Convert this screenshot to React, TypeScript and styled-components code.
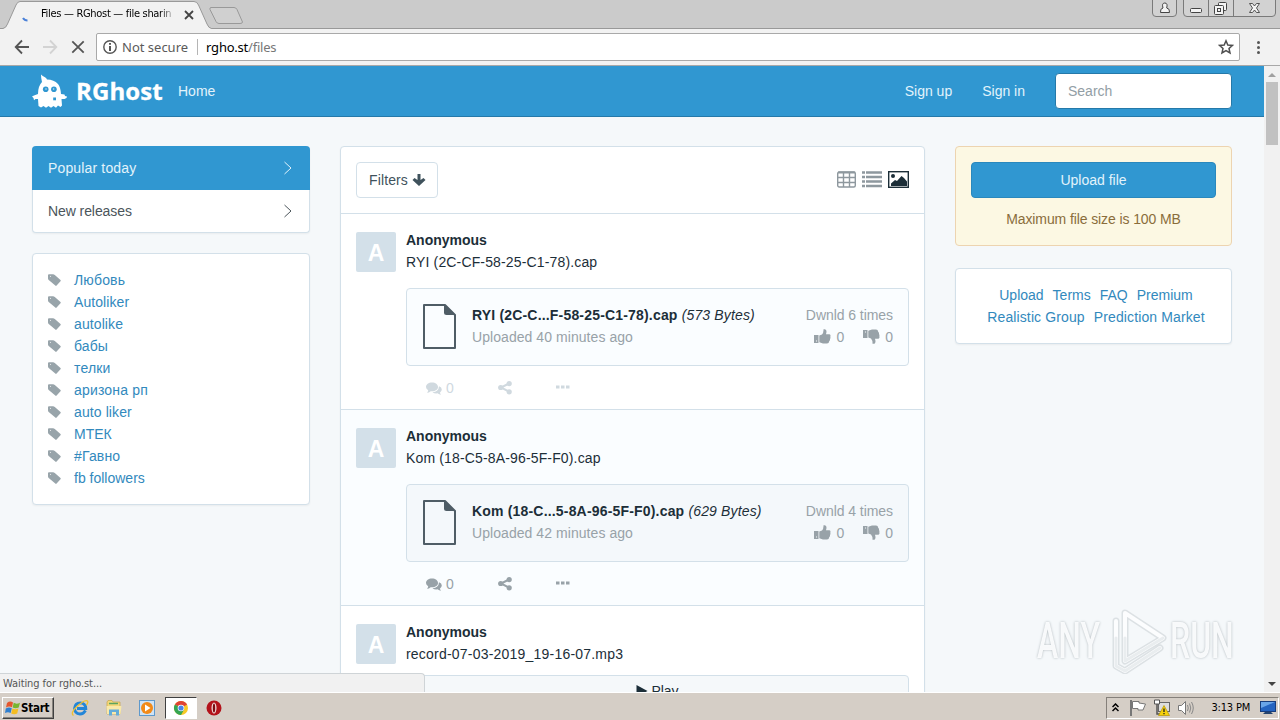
import React from "react";
import styled, { createGlobalStyle } from "styled-components";

const tags = [
  { name: "Любовь", spacing: 0.15 },
  { name: "Autoliker", spacing: 0.08 },
  { name: "autolike", spacing: 0.1 },
  { name: "бабы", spacing: 0.1 },
  { name: "телки", spacing: 0.15 },
  { name: "аризона рп", spacing: 0.18 },
  { name: "auto liker", spacing: 0.1 },
  { name: "МТЕК", spacing: 0 },
  { name: "#Гавно", spacing: 0.15 },
  { name: "fb followers", spacing: 0 },
];

const posts = [
  {
    title: "RYI (2C-CF-58-25-C1-78).cap",
    file: "RYI (2C-C...F-58-25-C1-78).cap",
    size: "(573 Bytes)",
    ago: "Uploaded 40 minutes ago",
    times: 6,
    tinted: false,
  },
  {
    title: "Kom (18-C5-8A-96-5F-F0).cap",
    file: "Kom (18-C...5-8A-96-5F-F0).cap",
    size: "(629 Bytes)",
    ago: "Uploaded 42 minutes ago",
    times: 4,
    tinted: true,
  },
];

const GhostIcon = () => (
  <svg width="35" height="34" viewBox="0 0 35 34">
    <path
      fill="#fff"
      d="M9 0.500 Q10.500 2.300 13 3.200 Q14.500 4 15 5.500 Q22 5.500 26 10 Q28.500 13 29 20 L32.500 20.500 L33 22 L35 22.500 L34.500 24 L32.500 25 L29.500 25 L30 31.500 L28.500 33 L26 31.500 L24 33.800 L21.500 32 L19 33.800 L16.500 32 L14 33.800 L11.500 32 L9 33.500 L6.500 32 L6 25 L3.500 25 L2 26.200 L1.500 24 L0 22.500 L2 21.500 L6 20 Q6 12 10 8 Q9 4.500 9 0.500 Z"
    />
    <circle cx="13.700" cy="15.200" r="2.800" fill="#3097d1" />
    <circle cx="21.900" cy="15.200" r="2.800" fill="#3097d1" />
    <circle cx="14" cy="15" r="0.800" fill="#c4e1f2" />
    <circle cx="21.600" cy="15" r="0.800" fill="#c4e1f2" />
    <rect x="21.200" y="23.500" width="2.800" height="2.800" fill="#3097d1" />
  </svg>
);

const ChevronIcon = () => (
  <svg width="8" height="14" viewBox="0 0 8 14">
    <path d="M0.500 1 L7 7 L0.500 13" fill="none" stroke="currentColor" />
  </svg>
);

const TagIcon = () => (
  <svg width="13" height="12" viewBox="0 0 13 12">
    <path
      fill="#98a4aa"
      fillRule="evenodd"
      d="M0 1.200 Q0 0.300 1 0.300 L5 0.300 Q6 0.300 6.800 1 L12.500 6 Q13 6.600 12.500 7.200 L8.600 11.600 Q8 12.200 7.300 11.600 L1 6.200 Q0 5.500 0 4.500 Z M2.500 1.800 A0.500 0.500 0 1 0 2.510 1.800 Z"
    />
  </svg>
);

const ArrowDownIcon = () => (
  <svg width="14" height="13" viewBox="0 0 14 13">
    <path
      fill="#3f525c"
      d="M5.500 0 H8.500 V6 L11.500 4 L13.500 6 L7 12 L0.500 6 L2.500 4 L5.500 6 Z"
    />
  </svg>
);

const GridIcon = () => (
  <svg width="19" height="17" viewBox="0 0 19 17">
    <g fill="none" stroke="#8e989e">
      <rect x="0.700" y="1" width="17.600" height="15" rx="1.500" strokeWidth="1.400" />
      <path d="M1 1.500 H18" strokeWidth="2" />
      <path d="M1 6.500 H18 M1 11.500 H18 M6.500 1 V16 M12.500 1 V16" strokeWidth="1.400" />
    </g>
  </svg>
);

const ListIcon = () => (
  <svg width="20" height="17" viewBox="0 0 20 17">
    <path
      stroke="#8e989e"
      strokeWidth="2.600"
      d="M0 1.500 H3 M4 1.500 H20 M0 6 H3 M4 6 H20 M0 10.500 H3 M4 10.500 H20 M0 15 H3 M4 15 H20"
    />
  </svg>
);

const PictureIcon = () => (
  <svg width="21" height="17" viewBox="0 0 21 17">
    <rect x="0.700" y="0.700" width="19.600" height="15.600" fill="none" stroke="#1c2e38" strokeWidth="1.400" />
    <circle cx="5" cy="5" r="2" fill="#1c2e38" />
    <path fill="#1c2e38" d="M3 15 V12.500 L7 9 L9 10 L13.500 5 L16 7 L19 10.500 V15 Z" />
  </svg>
);

const FileIcon = () => (
  <svg width="34" height="46" viewBox="0 0 34 46">
    <path d="M2 1 H23 L33 11 V44 H2 Z" fill="none" stroke="#4f5d66" strokeWidth="2" strokeLinejoin="round" />
    <path d="M22 0 L33.500 11 H24.500 Q22 11 22 8.500 Z" fill="#4f5d66" />
  </svg>
);

const ThumbIcon = ({ down }: { down?: boolean }) => (
  <svg width="17" height="15" viewBox="0 0 17 15">
    <g fill="#98a2a8" transform={down ? "rotate(180 8.500 7.500) translate(17 0) scale(-1 1)" : undefined}>
      <path d="M0 6 H4.500 V14 H0 Z M2 11.500 V12.500 H3 V11.500 Z" fillRule="evenodd" />
      <path d="M5.300 6.500 L8 5.500 Q9.700 3.500 9.500 0.300 Q12.500 -0.500 12.500 3 L12 5.300 H15.500 Q17 6 16.300 7.800 Q16.700 9 16 10 Q16.200 11.500 15.200 12.200 Q15 14.500 13 14.500 H9 L5.300 13.300 Z" />
    </g>
  </svg>
);

const CommentsIcon = () => (
  <svg width="16" height="13" viewBox="0 0 16 13">
    <path fill="currentColor" d="M6 0.500 C9.500 0.500 12 2.500 12 5 C12 7.500 9.500 9.300 6 9.300 L4.700 9.200 Q3 10.700 1 10.700 Q2.200 9.700 2.200 8.300 Q0 7 0 5 C0 2.500 2.500 0.500 6 0.500 Z" />
    <path fill="currentColor" d="M13 4.300 Q15.800 5.300 15.800 7.600 Q15.800 9.300 14 10.500 Q14 11.700 15.200 12.700 Q13 12.700 11.500 11.300 Q8.500 11.700 6.500 10.200 Q12.700 9.800 13 4.300 Z" />
  </svg>
);

const ShareIcon = () => (
  <svg width="14" height="14" viewBox="0 0 14 14">
    <path d="M11 2.500 L3 6.500 L11 10.700" stroke="currentColor" strokeWidth="2" fill="none" />
    <g fill="currentColor">
      <circle cx="11.200" cy="2.600" r="2.600" />
      <circle cx="2.700" cy="6.500" r="2.600" />
      <circle cx="11.200" cy="10.800" r="2.600" />
    </g>
  </svg>
);

const DotsIcon = () => (
  <svg width="14" height="6" viewBox="0 0 14 6">
    <path fill="currentColor" d="M0 0.500 H3.500 V3.500 H0 Z M5 0.500 H8.500 V3.500 H5 Z M10 0.500 H13.500 V3.500 H10 Z" />
  </svg>
);

const TabStripArt = () => (
  <svg width="250" height="29" viewBox="0 0 250 29">
    <path d="M0 28.500 H3 Q6 28 7.500 24 L16 5 Q17.500 1.500 20 1.500 H194 Q197 1.500 198.500 5 L207 24 Q208.500 28 211.500 28.500 V29 H0 Z" fill="#f2f2f2" />
    <path d="M0 28.500 H3 Q6 28 7.500 24 L16 5 Q17.500 1.500 20 1.500 H194 Q197 1.500 198.500 5 L207 24 Q208.500 28 211.500 28.500 H250" fill="none" stroke="#999" />
    <path d="M211 7.500 H234 Q236 7.500 237 9.500 L242.500 22 Q242.500 23.500 240 23.500 H219 Q217 23.500 216 21.500 L210 9.500 Q209.500 7.500 211 7.500 Z" fill="#d0d0d0" stroke="#999" />
    <path d="M23 18 Q24.500 20.500 27.500 20.500" fill="none" stroke="#4a80d8" strokeWidth="2" />
  </svg>
);

const WindowButtons = () => (
  <svg width="130" height="18" viewBox="0 0 130 18">
    <g fill="#d2d2d2" stroke="#7a7a7a">
      <path d="M2.500 0 V13 Q2.500 16.500 6 16.500 H23 Q26.500 16.500 26.500 13 V0" />
      <path d="M33.500 0 V13 Q33.500 16.500 37 16.500 H122 Q125.500 16.500 125.500 13 V0" />
      <path d="M58.500 0 V16 M83.500 0 V16" />
    </g>
    <g fill="#f4f4f4" stroke="#444">
      <path d="M10.500 12.500 Q10 8.500 13 8 Q11.500 3 14.800 3 Q18 3 16.700 8 Q20 8.500 19.500 12.500 Z" />
      <rect x="40.500" y="8.500" width="11" height="4" rx="1" />
      <rect x="68.500" y="2.500" width="8" height="8" rx="1" />
      <rect x="64.500" y="5.500" width="9" height="9" rx="1" />
      <rect x="67.500" y="8.500" width="3" height="3" />
      <path d="M99.500 3.500 H102.500 L104.500 6 L106.500 3.500 H109.500 L106.500 8 L109.500 12.500 H106.500 L104.500 10 L102.500 12.500 H99.500 L102.500 8 Z" strokeWidth="0.900" />
    </g>
  </svg>
);

const NavIcons = () => (
  <svg width="96" height="36" viewBox="0 0 96 36">
    <g fill="none" strokeWidth="1.800">
      <path d="M29 18 H16 M22 11.500 L15.700 18 L22 24.500" stroke="#555" />
      <path d="M43 18 H56 M50 11.500 L56.300 18 L50 24.500" stroke="#d3d3d3" />
      <path d="M72.300 12.300 L83.700 23.700 M83.700 12.300 L72.300 23.700" stroke="#555" />
    </g>
  </svg>
);

const InfoIcon = () => (
  <svg width="14" height="14" viewBox="0 0 14 14">
    <circle cx="7" cy="7" r="6.200" fill="none" stroke="#555" strokeWidth="1.400" />
    <path d="M7 3 V4.700 M7 6 V11" stroke="#555" strokeWidth="2" />
  </svg>
);

const StarIcon = () => (
  <svg width="16" height="16" viewBox="0 0 16 16">
    <path d="M8 1.800 L9.800 6 L14.400 6.400 L11 9.500 L12 14 L8 11.600 L4 14 L5 9.500 L1.600 6.400 L6.200 6 Z" fill="none" stroke="#4f4f4f" strokeWidth="1.500" />
  </svg>
);

const AnyRunMark = () => (
  <svg width="60" height="66" viewBox="0 0 60 66">
    <g fill="none" strokeLinejoin="round" strokeLinecap="round">
      <path d="M17 5 L55 30 L17 53 Z M8 13 V58 L17 63 L52 40" stroke="#dce1e4" strokeWidth="7" />
      <path d="M17 5 L55 30 L17 53 Z M8 13 V58 L17 63 L52 40" stroke="#fcfdfe" strokeWidth="4" />
      <path d="M17 30 V53 L55 30 M8 30 V58 L17 63 L52 40" stroke="#e9edef" strokeWidth="3" />
    </g>
  </svg>
);

const FlagIcon = () => (
  <svg width="18" height="18" viewBox="0 0 18 18">
    <path d="M2 1 V17" stroke="#777" strokeWidth="2" />
    <path d="M3.500 2.500 H10 V4 L16.500 5 L14 11 L9 11 V9.500 H3.500 Z" fill="#fff" stroke="#777" />
  </svg>
);

const NetworkIcon = () => (
  <svg width="18" height="18" viewBox="0 0 18 18">
    <rect x="5.500" y="3.500" width="11" height="9" fill="#ddd" stroke="#666" />
    <path d="M1.500 1 V5 H6.500 V1 Z" fill="#fff" stroke="#555" />
    <path d="M4 5 V15 H8" fill="none" stroke="#555" strokeWidth="1.500" />
    <path d="M11 6.500 L16.500 16.500 H5.500 Z" fill="#f7d20c" stroke="#b59300" strokeWidth="0.700" />
    <path d="M11 9.500 V13 M11 14 V15.200" stroke="#222" strokeWidth="1.300" />
  </svg>
);

const SpeakerIcon = () => (
  <svg width="18" height="18" viewBox="0 0 18 18">
    <path d="M1.500 6.500 H4.500 L8.500 2.500 V15.500 L4.500 11.500 H1.500 Z" fill="#fff" stroke="#777" />
    <path d="M10.500 6 Q12 9 10.500 12 M12.500 4.500 Q15 9 12.500 13.500 M14.500 3 Q18 9 14.500 15" fill="none" stroke="#888" />
  </svg>
);

const DesktopIcon = () => (
  <svg width="16" height="14" viewBox="0 0 16 14">
    <rect x="0.500" y="0.500" width="15" height="10" fill="#2464c0" stroke="#173d7c" />
    <path d="M1 1 H15 L1 7 Z" fill="#69a5e8" />
    <path d="M5 11 H11 L13 13 H3 Z" fill="#25446e" />
  </svg>
);

const WindowsIcon = () => (
  <svg width="16" height="16" viewBox="0 0 16 16">
    <path d="M2 3 Q5 0.500 8 2.500 L7 7.300 Q4 5.500 1 7.500 Z" fill="#e4572e" />
    <path d="M8.700 2.800 Q11.500 4.500 15 2.700 L13.700 7.500 Q10.500 9 7.700 7.500 Z" fill="#78b62e" />
    <path d="M0.800 8.500 Q4 6.500 6.800 8.300 L5.600 13 Q3 11.300 0 13 Z" fill="#2f7fd0" />
    <path d="M7.400 8.500 Q10.500 10 13.400 8.500 L12.200 13.500 Q9 15 6.200 13.400 Z" fill="#f4bd22" />
  </svg>
);

const IeIcon = () => (
  <svg width="18" height="18" viewBox="0 0 18 18">
    <path d="M14.500 11.500 Q12.500 15 9 15 Q3.500 14.500 3.500 9.300 Q4 4 9.300 3.800 Q14.500 4 14.800 9.500 H6" fill="none" stroke="#2386d8" strokeWidth="2.800" />
    <path d="M2.500 16.500 Q-1 14 6 7.500 Q14 0 16.500 2 Q17.500 3.500 15.500 6" fill="none" stroke="#efc030" strokeWidth="1.300" />
  </svg>
);

const ExplorerIcon = () => (
  <svg width="18" height="18" viewBox="0 0 18 18">
    <path d="M2 3 L3 1.500 H7 L8 3 H15 V15 H2 Z" fill="#f3d779" stroke="#c9a548" strokeWidth="0.700" />
    <path d="M4 4.500 H13" stroke="#5ba45f" strokeWidth="1.500" />
    <path d="M1.500 7 H16.500 L15.500 15 H2 Z" fill="#f9e9a9" />
    <path d="M4 16.500 V10.500 H14 V16.500 H11 V13 H7 V16.500 Z" fill="#64acd8" />
  </svg>
);

const PlayerIcon = () => (
  <svg width="18" height="18" viewBox="0 0 18 18">
    <rect x="1.500" y="1.500" width="15" height="15" fill="#cfe3f5" stroke="#5e99cc" />
    <circle cx="9" cy="9" r="6" fill="#f28a18" />
    <path d="M7 5.500 L12.500 9 L7 12.500 Z" fill="#fff" />
  </svg>
);

const ChromeIcon = () => (
  <svg width="16" height="16" viewBox="0 0 16 16">
    <circle cx="8" cy="8" r="7" fill="#f7c927" />
    <path d="M8 8 L1.900 4.500 A7 7 0 0 1 14.100 4.500 Z" fill="#df4335" />
    <path d="M8 8 L1.900 4.500 A7 7 0 0 0 8 15 L11 9.700 Z" fill="#35a552" />
    <circle cx="8" cy="8" r="3.300" fill="#fff" />
    <circle cx="8" cy="8" r="2.600" fill="#4a84e8" />
  </svg>
);

const OperaIcon = () => (
  <svg width="16" height="16" viewBox="0 0 16 16">
    <circle cx="8" cy="8" r="7.500" fill="#b3131b" />
    <ellipse cx="8" cy="8" rx="2.500" ry="5.500" fill="#f3dcdc" />
    <ellipse cx="8" cy="8" rx="1.200" ry="4.600" fill="#7c0b10" />
  </svg>
);

const App = () => {
  return (
    <>
      <GlobalStyle />
      <Screen>
        <TabStrip>
          <TabArt>
            <TabStripArt />
          </TabArt>
          <TabTitle>Files — RGhost — file sharin</TabTitle>
          <TabClose>
            <svg width="10" height="10" viewBox="0 0 10 10">
              <path d="M1 1 L9 9 M9 1 L1 9" stroke="#444" strokeWidth="1.800" />
            </svg>
          </TabClose>
          <WindowControls>
            <WindowButtons />
          </WindowControls>
        </TabStrip>
        <Toolbar>
          <NavIcons />
          <AddressBar>
            <InfoIcon />
            <NotSecure>Not secure</NotSecure>
            <Url>
              rgho.st<span>/files</span>
            </Url>
            <StarIcon />
          </AddressBar>
          <MenuDots>
            <i />
            <i />
            <i />
          </MenuDots>
        </Toolbar>
        <Viewport>
          <Page>
            <Navbar>
              <GhostIcon />
              <Brand>RGhost</Brand>
              <NavLink>Home</NavLink>
              <NavRight>
                <NavLink>Sign up</NavLink>
                <NavLink>Sign in</NavLink>
                <SearchBox>Search</SearchBox>
              </NavRight>
            </Navbar>
            <Columns>
              <Sidebar>
                <Menu>
                  <MenuItem $active>
                    Popular today
                    <ChevronIcon />
                  </MenuItem>
                  <MenuItem>
                    New releases
                    <ChevronIcon />
                  </MenuItem>
                </Menu>
                <TagPanel>
                  {tags.map((tag) => (
                    <TagRow key={tag.name} $spacing={tag.spacing}>
                      <TagIcon />
                      {tag.name}
                    </TagRow>
                  ))}
                </TagPanel>
              </Sidebar>
              <Feed>
                <FeedHeader>
                  <FilterButton>
                    Filters
                    <ArrowDownIcon />
                  </FilterButton>
                  <ViewModes>
                    <GridIcon />
                    <ListIcon />
                    <PictureIcon />
                  </ViewModes>
                </FeedHeader>
                {posts.map((post) => (
                  <Post key={post.title} $tinted={post.tinted}>
                    <Avatar>A</Avatar>
                    <PostBody>
                      <Author>Anonymous</Author>
                      <PostTitle $spacing={0.15}>{post.title}</PostTitle>
                      <FileCard $tinted={post.tinted}>
                        <FileIcon />
                        <FileInfo>
                          <FileName>
                            <b>{post.file}</b> <em>{post.size}</em>
                          </FileName>
                          <Muted $spacing={0.06}>{post.ago}</Muted>
                        </FileInfo>
                        <FileStats>
                          <Muted $spacing={-0.06}>Dwnld {post.times} times</Muted>
                          <Votes>
                            <ThumbIcon />
                            <span>0</span>
                            <ThumbIcon down />
                            <span>0</span>
                          </Votes>
                        </FileStats>
                      </FileCard>
                      <Actions $tinted={post.tinted}>
                        <Action $width={72}>
                          <CommentsIcon />0
                        </Action>
                        <Action $width={58}>
                          <ShareIcon />
                        </Action>
                        <Action $width={20}>
                          <DotsIcon />
                        </Action>
                      </Actions>
                    </PostBody>
                  </Post>
                ))}
                <Post $tinted={false}>
                  <Avatar>A</Avatar>
                  <PostBody>
                    <Author>Anonymous</Author>
                    <PostTitle $spacing={0.21}>record-07-03-2019_19-16-07.mp3</PostTitle>
                    <PlayBar>
                      <svg width="12" height="12" viewBox="0 0 12 12">
                        <path d="M0.500 0 L11.500 6 L0.500 12 Z" fill="#1c2e38" />
                      </svg>
                      Play
                    </PlayBar>
                  </PostBody>
                </Post>
              </Feed>
              <Aside>
                <UploadPanel>
                  <UploadButton>Upload file</UploadButton>
                  <UploadNote>Maximum file size is 100 MB</UploadNote>
                </UploadPanel>
                <LinksPanel>
                  <LinksRow $spacing={0}>
                    <a>Upload</a>
                    <a>Terms</a>
                    <a>FAQ</a>
                    <a>Premium</a>
                  </LinksRow>
                  <LinksRow $spacing={0.12}>
                    <a>Realistic Group</a>
                    <a>Prediction Market</a>
                  </LinksRow>
                </LinksPanel>
              </Aside>
            </Columns>
          </Page>
          <Scrollbar>
            <ScrollArrow />
            <ScrollThumb />
            <ScrollArrow $down />
          </Scrollbar>
          <StatusBubble>Waiting for rgho.st...</StatusBubble>
          <Watermark>
            <span>ANY</span>
            <AnyRunMark />
            <span>RUN</span>
          </Watermark>
        </Viewport>
        <Taskbar>
          <StartButton>
            <WindowsIcon />
            Start
          </StartButton>
          <QuickLaunch>
            <TaskIcon>
              <IeIcon />
            </TaskIcon>
            <TaskIcon>
              <ExplorerIcon />
            </TaskIcon>
            <TaskIcon>
              <PlayerIcon />
            </TaskIcon>
            <TaskIcon $pressed>
              <ChromeIcon />
            </TaskIcon>
            <TaskIcon>
              <OperaIcon />
            </TaskIcon>
          </QuickLaunch>
          <Tray>
            <TrayArrow width="7" height="9" viewBox="0 0 7 9">
              <path d="M0.500 4 L3.500 1 L6.500 4 M0.500 8 L3.500 5 L6.500 8" fill="none" stroke="#000" strokeWidth="1.500" />
            </TrayArrow>
            <FlagIcon />
            <NetworkIcon />
            <SpeakerIcon />
            <Clock>3:13 PM</Clock>
            <DesktopIcon />
          </Tray>
        </Taskbar>
      </Screen>
    </>
  );
};

export default App;

const GlobalStyle = createGlobalStyle`
  * {
    box-sizing: border-box;
  }
  body {
    margin: 0;
    overflow: hidden;
    font-family: "Liberation Sans", Arial, sans-serif;
    font-size: 14px;
    line-height: 22px;
    color: #1c2e38;
  }
  svg {
    display: block;
    flex: none;
  }
`;

const Screen = styled.div`
  width: 1280px;
  height: 720px;
  display: flex;
  flex-direction: column;
  overflow: hidden;
`;

const TabStrip = styled.div`
  position: relative;
  height: 29px;
  display: flex;
  align-items: center;
  padding-left: 41px;
  background: #cbcbcb;
  border-bottom: 1px solid #999;
`;

const TabArt = styled.div`
  position: absolute;
  left: 0;
  top: 0;
`;

const TabTitle = styled.div`
  position: relative;
  width: 135px;
  white-space: nowrap;
  font-family: "DejaVu Sans Condensed", "DejaVu Sans", sans-serif;
  font-size: 11px;
  letter-spacing: -0.3px;
  color: #000;
  mask-image: linear-gradient(to right, #000 88%, transparent);
`;

const TabClose = styled.div`
  position: relative;
  margin-left: 8px;
  padding-top: 1px;
`;

const WindowControls = styled.div`
  margin-left: auto;
  align-self: flex-start;
  width: 130px;
`;

const Toolbar = styled.div`
  height: 37px;
  display: flex;
  align-items: center;
  background: #f2f2f2;
  border-bottom: 1px solid #a8a8a8;
  font-family: "Noto Sans", "Open Sans", sans-serif;
`;

const AddressBar = styled.div`
  width: 1144px;
  height: 28px;
  display: flex;
  align-items: center;
  padding: 0 5px 0 6px;
  background: #fff;
  border: 1px solid #a9a9a9;
  border-radius: 2px;

  svg:last-child {
    margin-left: auto;
  }
`;

const NotSecure = styled.div`
  margin-left: 5px;
  padding-right: 9px;
  font-size: 13px;
  line-height: 16px;
  color: #5a5a5a;
  border-right: 1px solid #b5b5b5;
`;

const Url = styled.div`
  margin-left: 8px;
  font-size: 13px;
  letter-spacing: -0.22px;
  color: #000;

  span {
    color: #777;
  }
`;

const MenuDots = styled.div`
  width: 36px;
  display: flex;
  flex-direction: column;
  align-items: center;
  gap: 2px;

  i {
    width: 3px;
    height: 3px;
    border-radius: 50%;
    background: #555;
  }
`;

const Viewport = styled.div`
  position: relative;
  height: 626px;
  display: flex;
  overflow: hidden;
`;

const Page = styled.div`
  width: 1264px;
  height: 626px;
  overflow: hidden;
  background: #f5f8fa;
`;

const Navbar = styled.div`
  height: 51px;
  display: flex;
  align-items: center;
  padding: 0 32px;
  background: #3097d1;
  border-bottom: 1px solid #2579a9;
`;

const Brand = styled.div`
  width: 87px;
  margin: 0 15px 0 9px;
  font-family: "Open Sans", "Noto Sans", sans-serif;
  font-weight: 700;
  font-size: 24px;
  letter-spacing: 0.1px;
  color: #fff;
  -webkit-text-stroke: 0.3px #fff;
`;

const NavLink = styled.div`
  color: #e2f3fb;
`;

const NavRight = styled.div`
  margin-left: auto;
  display: flex;
  align-items: center;
  gap: 30px;
`;

const SearchBox = styled.div`
  width: 177px;
  height: 36px;
  padding: 6px 12px;
  background: #fff;
  border: 1px solid #2579a9;
  border-radius: 4px;
  color: #929ea5;
`;

const Columns = styled.div`
  display: flex;
  align-items: flex-start;
  gap: 30px;
  padding: 29px 32px 0;
`;

const Sidebar = styled.div`
  width: 278px;
`;

const Panel = styled.div`
  background: #fff;
  border: 1px solid #d3e0e9;
  border-radius: 4px;
  box-shadow: 0 1px 2px rgba(0, 0, 0, 0.05);
`;

const Menu = styled(Panel)`
  border-top: 0;
  height: 87px;
`;

const MenuItem = styled.div<{ $active?: boolean }>`
  height: ${({ $active }) => ($active ? "44px" : "42px")};
  margin: 0 -1px;
  padding: 0 18px 0 16px;
  display: flex;
  align-items: center;
  justify-content: space-between;
  letter-spacing: ${({ $active }) => ($active ? "0.15px" : "-0.08px")};
  color: ${({ $active }) => ($active ? "#e2f3fb" : "#4b555b")};
  background: ${({ $active }) => ($active ? "#3097d1" : "transparent")};
  border-radius: ${({ $active }) => ($active ? "4px 4px 0 0" : "0")};
`;

const TagPanel = styled(Panel)`
  margin-top: 20px;
  padding: 15px;
  height: 252px;
`;

const TagRow = styled.div<{ $spacing: number }>`
  height: 22px;
  display: flex;
  align-items: center;
  gap: 13px;
  color: #3289bd;
  letter-spacing: ${({ $spacing }) => $spacing}px;
`;

const Feed = styled(Panel)`
  width: 585px;
  height: 700px;
`;

const FeedHeader = styled.div`
  height: 67px;
  padding: 15px;
  display: flex;
  justify-content: space-between;
  border-bottom: 1px solid #d3e0e9;
`;

const FilterButton = styled.div`
  width: 82px;
  height: 36px;
  padding: 0 11px 0 12px;
  display: flex;
  align-items: center;
  justify-content: space-between;
  border: 1px solid #d3e0e9;
  border-radius: 4px;
  letter-spacing: 0.12px;
  color: #3f525c;
`;

const ViewModes = styled.div`
  display: flex;
  align-items: flex-start;
  gap: 6px;
  padding-top: 9px;
`;

const Post = styled.div<{ $tinted: boolean }>`
  height: 196px;
  padding: 15px;
  display: flex;
  gap: 10px;
  background: ${({ $tinted }) => ($tinted ? "#fafdff" : "#fff")};
  border-bottom: 1px solid #d3e0e9;
`;

const Avatar = styled.div`
  width: 40px;
  height: 40px;
  margin-top: 3px;
  background: #d3e0e9;
  border-radius: 2px;
  color: #fff;
  font-weight: 700;
  font-size: 23px;
  line-height: 43px;
  text-align: center;
`;

const PostBody = styled.div`
  flex: 1;
`;

const Author = styled.div`
  font-weight: 700;
`;

const PostTitle = styled.div<{ $spacing: number }>`
  letter-spacing: ${({ $spacing }) => $spacing}px;
`;

const FileCard = styled.div<{ $tinted: boolean }>`
  height: 78px;
  margin-top: 15px;
  padding: 15px;
  display: flex;
  background: ${({ $tinted }) => ($tinted ? "#f4f8fb" : "#fafdff")};
  border: 1px solid #d3e0e9;
  border-radius: 4px;
`;

const FileInfo = styled.div`
  margin-left: 16px;
  flex: 1;
`;

const FileName = styled.div`
  white-space: nowrap;
  letter-spacing: 0.15px;

  b {
    letter-spacing: 0.18px;
  }
`;

const Muted = styled.div<{ $spacing: number }>`
  color: #98a2a8;
  letter-spacing: ${({ $spacing }) => $spacing}px;
`;

const FileStats = styled.div`
  display: flex;
  flex-direction: column;
  align-items: flex-end;
`;

const Votes = styled.div`
  display: flex;
  align-items: center;
  color: #98a2a8;

  svg {
    margin-bottom: 2px;
  }
  span {
    margin-left: 5px;
  }
  span + svg {
    margin-left: 19px;
  }
`;

const Actions = styled.div<{ $tinted: boolean }>`
  display: flex;
  align-items: center;
  padding: 11px 20px 0;
  color: ${({ $tinted }) => ($tinted ? "#98a2a8" : "#d0d9df")};
`;

const Action = styled.div<{ $width: number }>`
  width: ${({ $width }) => $width}px;
  height: 22px;
  display: flex;
  align-items: center;
  gap: 4px;
`;

const PlayBar = styled.div`
  height: 36px;
  margin-top: 10px;
  padding-top: 4px;
  display: flex;
  justify-content: center;
  gap: 3px;
  background: #f5f8fa;
  border: 1px solid #d3e0e9;
  border-radius: 4px;

  svg {
    margin-top: 5px;
  }
`;

const Aside = styled.div`
  width: 277px;
`;

const UploadPanel = styled.div`
  height: 100px;
  padding: 15px;
  background: #fcf8e3;
  border: 1px solid #edd4b0;
  border-radius: 4px;
  text-align: center;
`;

const UploadButton = styled.div`
  height: 36px;
  line-height: 34px;
  background: #3097d1;
  border: 1px solid #2a88bd;
  border-radius: 4px;
  color: #e2f3fb;
`;

const UploadNote = styled.div`
  margin-top: 10px;
  letter-spacing: -0.1px;
  color: #8a6d3b;
`;

const LinksPanel = styled(Panel)`
  height: 76px;
  margin-top: 22px;
  padding: 15px 0 15px 5px;
`;

const LinksRow = styled.div<{ $spacing: number }>`
  display: flex;
  justify-content: center;
  gap: 9px;
  letter-spacing: ${({ $spacing }) => $spacing}px;
  color: #3289bd;
`;

const Scrollbar = styled.div`
  width: 16px;
  display: flex;
  flex-direction: column;
  align-items: center;
  background: #f1f1f1;
`;

const ScrollArrow = styled.div<{ $down?: boolean }>`
  margin: ${({ $down }) => ($down ? "auto 0 6px" : "7px 0 5px")};
  border: 4px solid transparent;
  border-top: ${({ $down }) => ($down ? "4px solid #444" : "0")};
  border-bottom: ${({ $down }) => ($down ? "0" : "4px solid #a0a0a0")};
`;

const ScrollThumb = styled.div`
  width: 12px;
  height: 63px;
  background: #c1c1c1;
`;

const StatusBubble = styled.div`
  position: absolute;
  left: 0;
  bottom: 0;
  width: 425px;
  height: 19px;
  padding-left: 3px;
  background: #f1f1f1;
  border: 1px solid #cfd4d7;
  border-width: 1px 1px 0 0;
  border-radius: 0 4px 0 0;
  font-family: "DejaVu Sans Condensed", "DejaVu Sans", sans-serif;
  font-size: 11px;
  line-height: 19px;
  letter-spacing: -0.08px;
  color: #555;
`;

const Watermark = styled.div`
  position: absolute;
  left: 1037px;
  top: 541px;
  display: flex;
  align-items: center;
  gap: 8px;

  span {
    width: 63px;
    font-family: Roboto, sans-serif;
    font-weight: 500;
    font-size: 50px;
    line-height: 68px;
    transform: scaleX(0.64);
    transform-origin: left;
    color: rgba(252, 253, 254, 0.95);
    text-shadow: 0 0 3px #aab2b7;
  }
  svg + span {
    margin-left: -6px;
  }
`;

const Taskbar = styled.div`
  height: 28px;
  display: flex;
  align-items: center;
  padding: 2px 1px 0 2px;
  background: #d5cec6;
  border-top: 1px solid #fff;
`;

const StartButton = styled.div`
  width: 52px;
  height: 22px;
  padding-left: 2px;
  display: flex;
  align-items: center;
  border: 1px solid;
  border-color: #fff #404040 #404040 #fff;
  box-shadow: inset -1px -1px 0 #88847e;
  font-family: "DejaVu Sans Condensed", "DejaVu Sans", sans-serif;
  font-weight: 700;
  font-size: 11.5px;
  letter-spacing: -0.25px;
  color: #000;
`;

const QuickLaunch = styled.div`
  display: flex;
  margin-left: 10px;
  gap: 1.5px;
`;

const TaskIcon = styled.div<{ $pressed?: boolean }>`
  width: 32px;
  height: 22px;
  display: flex;
  align-items: center;
  justify-content: center;
  background: ${({ $pressed }) => ($pressed ? "#fff" : "transparent")};
  border: ${({ $pressed }) => ($pressed ? "1px solid #fff" : "0")};
  border-top-color: #404040;
  border-left-color: #404040;
`;

const Tray = styled.div`
  width: 173px;
  height: 22px;
  margin-left: auto;
  padding: 0 2px 0 5px;
  display: flex;
  align-items: center;
  gap: 6px;
  border: 1px solid;
  border-color: #85807a #fff #fff #85807a;
`;

const TrayArrow = styled.svg`
  margin-right: 4px;
`;

const Clock = styled.div`
  margin-left: auto;
  margin-right: 4px;
  font-family: "DejaVu Sans Condensed", "DejaVu Sans", sans-serif;
  font-size: 11px;
  letter-spacing: -0.2px;
  color: #000;
`;
